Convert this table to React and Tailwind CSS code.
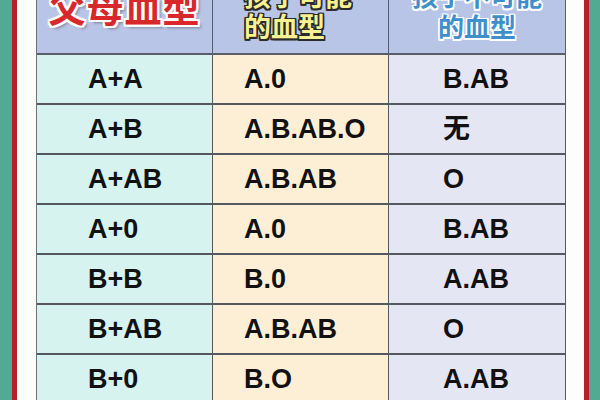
const rows = [
  ['A+A', 'A.0', 'B.AB'],
  ['A+B', 'A.B.AB.O', '无'],
  ['A+AB', 'A.B.AB', 'O'],
  ['A+0', 'A.0', 'B.AB'],
  ['B+B', 'B.0', 'A.AB'],
  ['B+AB', 'A.B.AB', 'O'],
  ['B+0', 'B.O', 'A.AB'],
];

const font = "[font-family:'Liberation_Sans','Noto_Sans_CJK_SC',sans-serif]";

function App() {
  return (
    <div className={`w-[600px] h-[400px] overflow-hidden flex bg-[#52aa93] ${font}`}>
      <div className="w-[12px] shrink-0" />
      <div className="flex-1 flex border-x-[5px] border-[#b52127] bg-[#fdfdfb]">
        <div className="flex-1 pl-[19px] pr-[18px]">
          <div className="grid grid-cols-[176px_176px_177px] border-l border-[#6b6f78]">
            {/* ================= HEADER ================= */}
            <div className="h-[55px] bg-[#b9c5e7] border-b-2 border-r border-[#5a5e68] flex justify-center">
              <div className="mt-[-8px] text-[37px] leading-[37px] font-bold text-[#d9282c] tracking-[1px] [text-shadow:2px_0_#fff,-2px_0_#fff,0_2px_#fff,0_-2px_#fff,2px_2px_#fff,-2px_-2px_#fff,2px_-2px_#fff,-2px_2px_#fff,3px_3px_3px_rgba(0,0,0,0.35)]">
                父母血型
              </div>
            </div>
            <div className="h-[55px] bg-[#b9c5e7] border-b-2 border-r border-[#5a5e68] pl-[31px]">
              <div className="mt-[-18px] text-[27px] leading-[31px] font-bold text-[#f7f191] [text-shadow:1.5px_0_#2b2b2b,-1.5px_0_#2b2b2b,0_1.5px_#2b2b2b,0_-1.5px_#2b2b2b,1.5px_1.5px_#2b2b2b,-1.5px_-1.5px_#2b2b2b,1.5px_-1.5px_#2b2b2b,-1.5px_1.5px_#2b2b2b]">
                孩子可能<br />的血型
              </div>
            </div>
            <div className="h-[55px] bg-[#b9c5e7] border-b-2 border-r border-[#5a5e68] flex justify-center">
              <div className="mt-[-18px] text-center text-[26px] leading-[31px] font-bold text-[#3f8fcb] [text-shadow:1.5px_0_#fff,-1.5px_0_#fff,0_1.5px_#fff,0_-1.5px_#fff,1.5px_1.5px_#fff,-1.5px_-1.5px_#fff,1.5px_-1.5px_#fff,-1.5px_1.5px_#fff]">
                孩子不可能<br />的血型
              </div>
            </div>

            {/* ================= ROWS ================= */}
            {rows.map(([parents, can, cannot], i) => (
              <div key={i} className="contents">
                <div className="h-[50px] bg-[#d6f3ef] border-b-2 border-r border-[#55585f] flex items-center pl-[51px] text-[27px] font-bold text-[#111]">
                  {parents}
                </div>
                <div className="h-[50px] bg-[#fdefd6] border-b-2 border-r border-[#55585f] flex items-center pl-[31px] text-[27px] font-bold text-[#111]">
                  {can}
                </div>
                <div className="h-[50px] bg-[#e4e6f4] border-b-2 border-r border-[#55585f] flex items-center pl-[54px] text-[27px] font-bold text-[#111]">
                  {cannot}
                </div>
              </div>
            ))}
          </div>
        </div>
      </div>
      <div className="w-[12px] shrink-0" />
    </div>
  );
}

export default App;
